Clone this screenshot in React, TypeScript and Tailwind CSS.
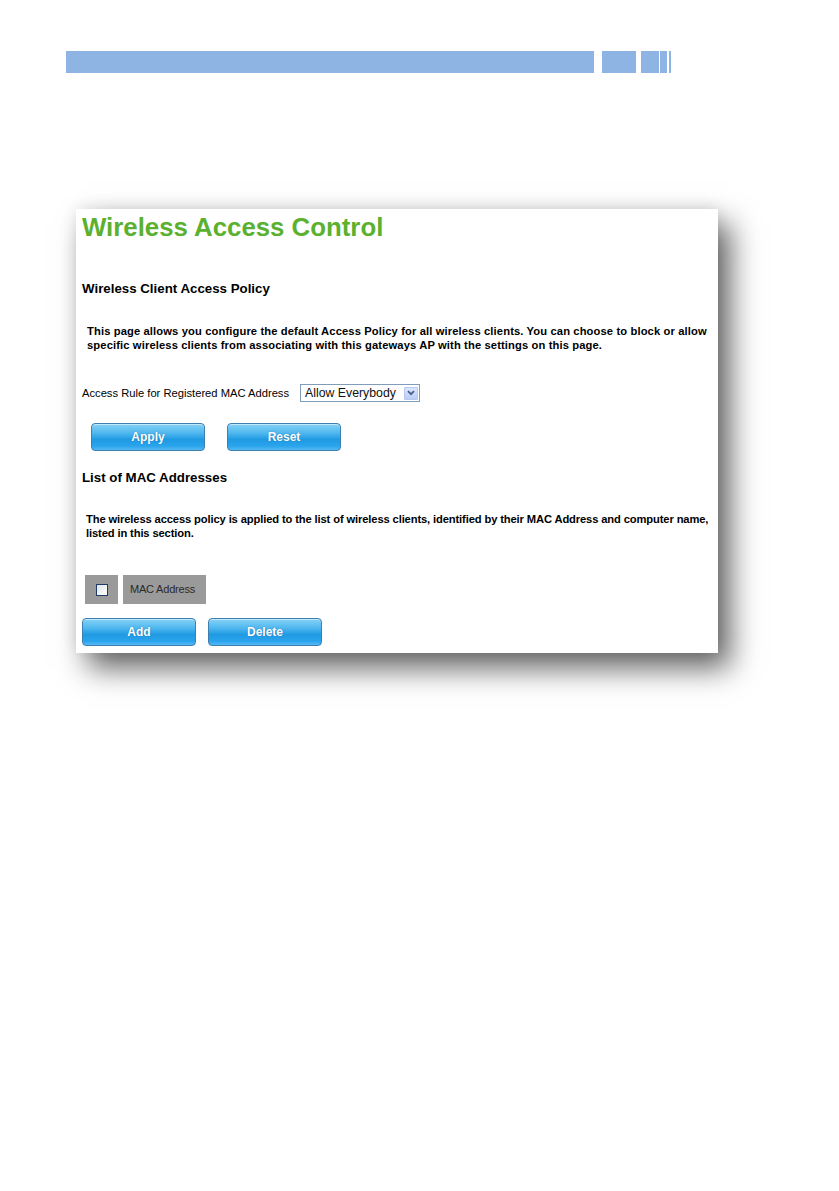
import React from "react";

const font = { fontFamily: '"Liberation Sans", Arial, sans-serif' };

function BlueButton({ label, className = "" }: { label: string; className?: string }) {
  return (
    <div
      className={
        "flex h-[28px] w-[114px] items-center justify-center rounded-[4px] border border-[#3d7fb0] bg-[linear-gradient(to_bottom,#86d2f6_0%,#4fb7ee_35%,#1f9ae3_60%,#2aa4ec_85%,#55b9f2_100%)] text-[12px] font-bold text-white shadow-[inset_0_1px_0_rgba(255,255,255,0.5)] [text-shadow:0_0_1px_rgba(0,60,120,0.6)] " +
        className
      }
    >
      {label}
    </div>
  );
}

export default function App() {
  return (
    <div className="h-[1191px] w-[839px] overflow-hidden bg-white" style={font}>
      {/* header bar */}
      <div className="flex h-[22px] pl-[66px] mt-[51px]">
        <div className="h-full w-[528px] bg-[#8eb4e3]" />
        <div className="ml-[8px] h-full w-[34px] bg-[#8eb4e3]" />
        <div className="ml-[5px] h-full w-[18px] bg-[#8eb4e3]" />
        <div className="ml-[1px] h-full w-[7px] bg-[#8eb4e3]" />
        <div className="ml-[2px] h-full w-[2px] bg-[#8eb4e3]" />
      </div>

      {/* panel */}
      <div className="ml-[76px] mt-[136px] h-[444px] w-[642px] bg-white shadow-[12px_15px_28px_rgba(0,0,0,0.62),0_-3px_14px_rgba(0,0,0,0.07)]">
        <div className="pl-[6px] pt-[3px] text-[25.8px] font-bold leading-[30px] text-[#5bb12f]">
          Wireless Access Control
        </div>

        <div className="mt-[39px] pl-[6px] text-[13.3px] font-bold leading-[16px] text-black">
          Wireless Client Access Policy
        </div>

        <div className="mt-[27px] whitespace-nowrap pl-[11px] text-[11.2px] font-bold leading-[14px] tracking-[0.12px] text-black">
          This page allows you configure the default Access Policy for all wireless clients. You can choose to block or allow
          <br />
          specific wireless clients from associating with this gateways AP with the settings on this page.
        </div>

        <div className="mt-[32px] flex h-[18px] items-center pl-[6px]">
          <div className="w-[218px] text-[11.2px] leading-[14px] text-black">Access Rule for Registered MAC Address</div>
          <div className="flex h-[18px] w-[120px] items-center justify-between border border-[#7f9db9] bg-white pl-[4px] pr-[1px]">
            <span className="text-[12.3px] leading-[14px] text-[#111]">Allow Everybody</span>
            <span className="flex h-[13px] w-[14px] items-center justify-center rounded-[1px] border border-[#b5c9f2] bg-[linear-gradient(to_bottom,#dbe6fc,#b9cdf8)]">
              <svg width="8" height="6" viewBox="0 0 8 6">
                <path d="M1 1.2 L4 4.2 L7 1.2" fill="none" stroke="#4a5f8c" strokeWidth="1.8" />
              </svg>
            </span>
          </div>
        </div>

        <div className="mt-[21px] flex gap-[22px] pl-[15px]">
          <BlueButton label="Apply" />
          <BlueButton label="Reset" />
        </div>

        <div className="mt-[19px] pl-[6px] text-[13.3px] font-bold leading-[16px] text-black">
          List of MAC Addresses
        </div>

        <div className="mt-[26px] whitespace-nowrap pl-[10px] text-[11.2px] font-bold leading-[14px] tracking-[-0.13px] text-black">
          The wireless access policy is applied to the list of wireless clients, identified by their MAC Address and computer name,
          <br />
          listed in this section.
        </div>

        <div className="mt-[35px] flex h-[29px] gap-[5px] pl-[9px]">
          <div className="flex h-full w-[33px] items-center justify-center bg-[#9a9a9a]">
            <div className="h-[12px] w-[12px] border border-[#1f3a66] bg-[linear-gradient(135deg,#dfe3e8,#ffffff)]" />
          </div>
          <div className="flex h-full w-[83px] items-center bg-[#9a9a9a] pl-[7px] text-[11px] tracking-[-0.2px] text-[#2a2a2a]">
            MAC Address
          </div>
        </div>

        <div className="mt-[14px] flex gap-[12px] pl-[6px]">
          <BlueButton label="Add" />
          <BlueButton label="Delete" />
        </div>
      </div>
    </div>
  );
}
